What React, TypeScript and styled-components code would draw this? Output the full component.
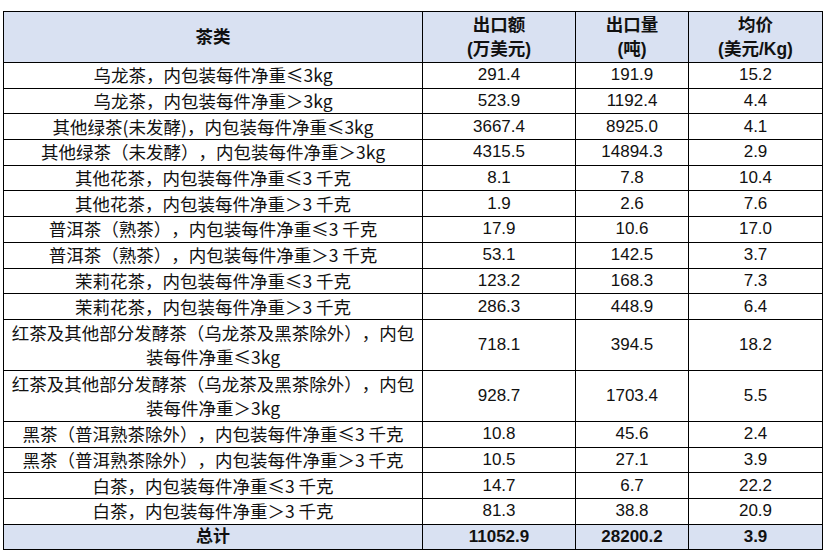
import React from "react";
import styled, { createGlobalStyle } from "styled-components";

const Global = createGlobalStyle`
  html, body { margin: 0; padding: 0; background: #ffffff; }
  body { font-family: "Liberation Sans", "Noto Sans CJK SC", sans-serif; color: #000; }
`;

const Page = styled.div`
  padding: 11px 0 0 3px;
`;

const Table = styled.table`
  border-collapse: collapse;
  table-layout: fixed;
  width: 819px;
  font-size: 17px;
  font-family: "Liberation Sans", "Noto Sans CJK SC", sans-serif;
  color: #111;
  text-spacing-trim: space-all;
`;

const Col = styled.col<{ $w: number }>`
  width: ${(p) => p.$w}px;
`;

const HeadRow = styled.tr`
  height: 51px;
  background: #d9e1f2;
`;

const HeadCell = styled.th`
  border: 1px solid #000;
  font-weight: bold;
  font-size: 17.5px;
  line-height: 24px;
  padding: 0;
  text-align: center;
  vertical-align: middle;
`;

const Row = styled.tr<{ $tall?: boolean }>`
  height: ${(p) => (p.$tall ? "51px" : "25.7px")};
`;

const Cell = styled.td<{ $name?: boolean }>`
  border: 1px solid #000;
  padding: 0 2px;
  text-align: center;
  vertical-align: middle;
  line-height: 24px;
  white-space: nowrap;
  font-size: ${(p) => (p.$name ? "17.5px" : "17px")};
  font-family: ${(p) =>
    p.$name
      ? `"Noto Sans CJK SC", "Liberation Sans", sans-serif`
      : `"Liberation Sans", "Noto Sans CJK SC", sans-serif`};
  text-spacing-trim: space-all;
`;

const TotalRow = styled.tr`
  height: 25px;
  background: #d9e1f2;
`;

const TotalCell = styled.td`
  border: 1px solid #000;
  padding: 0;
  text-align: center;
  vertical-align: middle;
  font-weight: bold;
  font-size: 17px;
  line-height: 22px;
`;

type R = { name: React.ReactNode; v: string; q: string; p: string; tall?: boolean };

const rows: R[] = [
  { name: "乌龙茶，内包装每件净重≤3kg", v: "291.4", q: "191.9", p: "15.2" },
  { name: "乌龙茶，内包装每件净重＞3kg", v: "523.9", q: "1192.4", p: "4.4" },
  { name: "其他绿茶(未发酵)，内包装每件净重≤3kg", v: "3667.4", q: "8925.0", p: "4.1" },
  { name: "其他绿茶（未发酵），内包装每件净重＞3kg", v: "4315.5", q: "14894.3", p: "2.9" },
  { name: "其他花茶，内包装每件净重≤3 千克", v: "8.1", q: "7.8", p: "10.4" },
  { name: "其他花茶，内包装每件净重＞3 千克", v: "1.9", q: "2.6", p: "7.6" },
  { name: "普洱茶（熟茶），内包装每件净重≤3 千克", v: "17.9", q: "10.6", p: "17.0" },
  { name: "普洱茶（熟茶），内包装每件净重＞3 千克", v: "53.1", q: "142.5", p: "3.7" },
  { name: "茉莉花茶，内包装每件净重≤3 千克", v: "123.2", q: "168.3", p: "7.3" },
  { name: "茉莉花茶，内包装每件净重＞3 千克", v: "286.3", q: "448.9", p: "6.4" },
  {
    name: (
      <>
        红茶及其他部分发酵茶（乌龙茶及黑茶除外），内包
        <br />
        装每件净重≤3kg
      </>
    ),
    v: "718.1",
    q: "394.5",
    p: "18.2",
    tall: true,
  },
  {
    name: (
      <>
        红茶及其他部分发酵茶（乌龙茶及黑茶除外），内包
        <br />
        装每件净重＞3kg
      </>
    ),
    v: "928.7",
    q: "1703.4",
    p: "5.5",
    tall: true,
  },
  { name: "黑茶（普洱熟茶除外），内包装每件净重≤3 千克", v: "10.8", q: "45.6", p: "2.4" },
  { name: "黑茶（普洱熟茶除外），内包装每件净重＞3 千克", v: "10.5", q: "27.1", p: "3.9" },
  { name: "白茶，内包装每件净重≤3 千克", v: "14.7", q: "6.7", p: "22.2" },
  { name: "白茶，内包装每件净重＞3 千克", v: "81.3", q: "38.8", p: "20.9" },
];

export default function App() {
  return (
    <Page>
      <Global />
      <Table>
        <colgroup>
          <Col $w={419} />
          <Col $w={153} />
          <Col $w={113} />
          <Col $w={134} />
        </colgroup>
        <thead>
          <HeadRow>
            <HeadCell>茶类</HeadCell>
            <HeadCell>
              出口额
              <br />
              (万美元)
            </HeadCell>
            <HeadCell>
              出口量
              <br />
              (吨)
            </HeadCell>
            <HeadCell>
              均价
              <br />
              (美元/Kg)
            </HeadCell>
          </HeadRow>
        </thead>
        <tbody>
          {rows.map((r, i) => (
            <Row key={i} $tall={r.tall}>
              <Cell $name>{r.name}</Cell>
              <Cell>{r.v}</Cell>
              <Cell>{r.q}</Cell>
              <Cell>{r.p}</Cell>
            </Row>
          ))}
          <TotalRow>
            <TotalCell>总计</TotalCell>
            <TotalCell>11052.9</TotalCell>
            <TotalCell>28200.2</TotalCell>
            <TotalCell>3.9</TotalCell>
          </TotalRow>
        </tbody>
      </Table>
    </Page>
  );
}
